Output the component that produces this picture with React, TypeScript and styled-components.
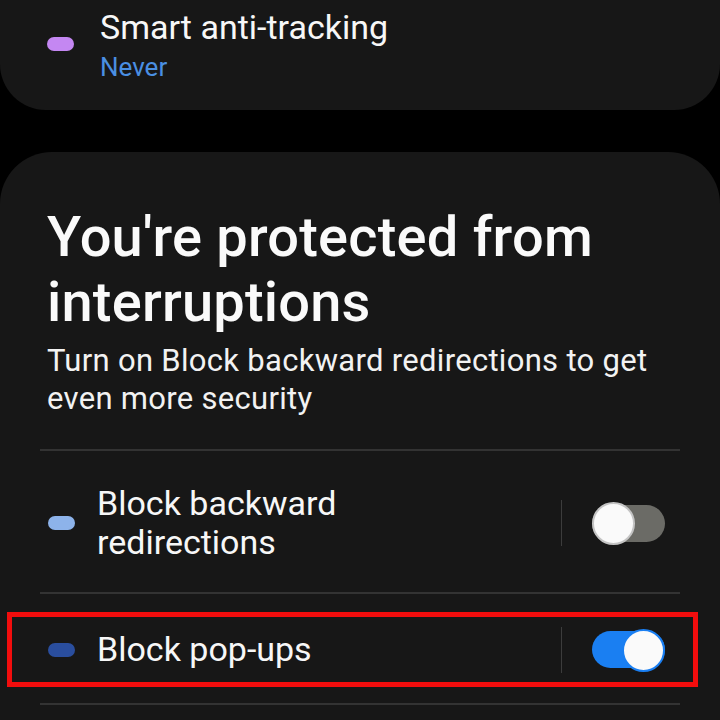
import React from "react";
import styled, { createGlobalStyle } from "styled-components";

const GlobalStyle = createGlobalStyle`
  html, body {
    margin: 0;
    padding: 0;
    background: #000;
  }
  body {
    font-family: Roboto, "Noto Sans", sans-serif;
    color: #fafafa;
  }
`;

interface ToggleProps {
  on: boolean;
}

interface PillProps {
  color: string;
}

export default function App() {
  return (
    <>
      <GlobalStyle />
      <Screen>
        <TopCard>
          <Row>
            <Pill color="#c487f2" />
            <TopTexts>
              <RowTitle>Smart anti-tracking</RowTitle>
              <Status>Never</Status>
            </TopTexts>
          </Row>
        </TopCard>

        <Card>
          <Header>
            <Title>You're protected from interruptions</Title>
            <Description>
              Turn on Block backward redirections to get even more security
            </Description>
          </Header>

          <Divider />
          <SettingRow>
            <Pill color="#8db3ea" />
            <SettingLabel>
              Block backward
              <br />
              redirections
            </SettingLabel>
            <Separator />
            <Toggle on={false}>
              <Thumb on={false} />
            </Toggle>
          </SettingRow>
          <Divider />
          <Highlight>
            <SettingRow>
              <Pill color="#2a4e9e" />
              <SettingLabel>Block pop-ups</SettingLabel>
              <Separator />
              <Toggle on>
                <Thumb on />
              </Toggle>
            </SettingRow>
          </Highlight>
          <Divider />
        </Card>
      </Screen>
    </>
  );
}

const Screen = styled.div`
  width: 720px;
  height: 720px;
  overflow: hidden;
  background: #000;
  display: flex;
  flex-direction: column;
  gap: 42px;
`;

const TopCard = styled.div`
  background: #171717;
  border-radius: 0 0 46px 46px;
  height: 110px;
  box-sizing: border-box;
  padding: 5px 0 0 47px;
`;

const Row = styled.div`
  display: flex;
  align-items: center;
  gap: 26px;
`;

const TopTexts = styled.div`
  display: flex;
  flex-direction: column;
`;

const RowTitle = styled.div`
  font-size: 34px;
  line-height: 44px;
  color: #f7f7f7;
`;

const Status = styled.div`
  margin-top: 2px;
  font-size: 26px;
  line-height: 32px;
  color: #4a8fe3;
`;

const Pill = styled.div<PillProps>`
  width: 27px;
  height: 14px;
  border-radius: 7px;
  background: ${(p) => p.color};
  flex-shrink: 0;
`;

const Card = styled.div`
  flex: 1;
  background: #171717;
  border-radius: 52px 52px 0 0;
  padding: 53px 40px 0;
  display: flex;
  flex-direction: column;
`;

const Header = styled.div`
  padding: 0 7px 31px;
`;

const Title = styled.h1`
  margin: 0;
  font-size: 56px;
  font-weight: 500;
  line-height: 65px;
  color: #fafafa;
  letter-spacing: 0.2px;
`;

const Description = styled.p`
  margin: 7px 0 0;
  font-size: 31px;
  line-height: 38px;
  color: #f2f2f2;
  letter-spacing: 0.3px;
`;

const Divider = styled.div`
  height: 2px;
  background: #333;
`;

const SettingRow = styled.div`
  display: flex;
  align-items: center;
  padding: 33px 15px 30px 8px;
`;

const Highlight = styled.div`
  margin: 18px -18px 16px -33px;
  border: 5px solid #f20d0d;
  & > ${SettingRow} {
    padding: 0 28px 0 36px;
    height: 65px;
  }
`;

const SettingLabel = styled.div`
  flex: 1;
  margin-left: 22px;
  font-size: 34px;
  line-height: 39px;
  color: #f7f7f7;
`;

const Separator = styled.div`
  width: 1px;
  height: 46px;
  background: #3c3c3c;
  margin-right: 30px;
`;

const Toggle = styled.div<ToggleProps>`
  position: relative;
  width: 73px;
  height: 37px;
  border-radius: 19px;
  background: ${(p) => (p.on ? "#1a7ff2" : "#6b6b66")};
`;

const Thumb = styled.div<ToggleProps>`
  position: absolute;
  top: 50%;
  left: ${(p) => (p.on ? "30px" : "0")};
  width: 43px;
  height: 43px;
  margin-top: -21px;
  border-radius: 50%;
  box-sizing: border-box;
  background: #fafafa;
  border: 2px solid ${(p) => (p.on ? "#1a7ff2" : "#c4c4c4")};
`;
